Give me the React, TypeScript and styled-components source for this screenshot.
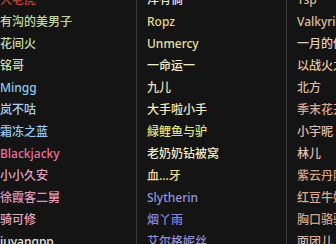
import React from "react";
import styled, { createGlobalStyle } from "styled-components";

const Global = createGlobalStyle`
  html, body {
    margin: 0;
    padding: 0;
    background: #141414;
    overflow: hidden;
  }
  body {
    font-family: "Noto Sans", "Noto Sans CJK SC", sans-serif;
  }
`;

const Board = styled.div`
  width: 336px;
  height: 244px;
  overflow: hidden;
  background: #141414;
`;

const Table = styled.div`
  display: grid;
  grid-template-columns: 147px 150px 150px;
  margin-left: -10px;
  margin-top: -11px;
`;

const Column = styled.div<{ $divider?: boolean }>`
  display: flex;
  flex-direction: column;
  padding-left: 10px;
  border-right: ${(p) => (p.$divider ? "1px solid #3a3a3a" : "none")};
  min-width: 0;
`;

const Name = styled.div<{ $color: string }>`
  height: 22px;
  line-height: 22px;
  font-size: 12px;
  font-weight: 500;
  color: ${(p) => p.$color};
  white-space: nowrap;
  overflow: visible;
`;

type Entry = [string, string];

const columns: Entry[][] = [
  [
    ["大老虎", "#d2412f"],
    ["有沟的美男子", "#bcd9a2"],
    ["花间火", "#c4dca8"],
    ["铭哥", "#cfdcaa"],
    ["Mingg", "#8fc9ee"],
    ["岚不咕", "#a3d2f0"],
    ["霜冻之蓝", "#95cbee"],
    ["Blackjacky", "#ea6f9b"],
    ["小小久安", "#e6a2c2"],
    ["徐霞客二舅", "#e495b6"],
    ["骑可修", "#e4a2c2"],
    ["juyangpp", "#e8e8e8"],
  ],
  [
    ["洋有倘", "#e6e6e6"],
    ["Ropz", "#e2d98f"],
    ["Unmercy", "#e8e0a2"],
    ["一命运一", "#f2f0d2"],
    ["九儿", "#ece4b4"],
    ["大手啦小手", "#f2eac4"],
    ["緑鲤鱼与驴", "#e2e272"],
    ["老奶奶钻被窝", "#f2eac4"],
    ["血...牙", "#f2da92"],
    ["Slytherin", "#9494d8"],
    ["烟丫雨", "#8484e2"],
    ["艾尔格妮丝", "#8e8ed8"],
  ],
  [
    ["Ysp", "#d8b898"],
    ["Valkyrie", "#dcbc9c"],
    ["一月的像", "#e2cab2"],
    ["以战火之", "#e2c2a2"],
    ["北方", "#dabaa2"],
    ["季末花开", "#daaa92"],
    ["小宇昵", "#e2baa2"],
    ["林儿", "#e2c2b2"],
    ["紫云丹阳", "#d2a282"],
    ["红豆牛奶", "#daaa8a"],
    ["胸口骆驼", "#d2a282"],
    ["面团儿", "#dab2a2"],
  ],
];

export default function App() {
  return (
    <Board>
      <Global />
      <Table>
        {columns.map((col, ci) => (
          <Column key={ci} $divider={ci < 2}>
            {col.map(([text, color], ri) => (
              <Name key={ri} $color={color}>
                {text}
              </Name>
            ))}
          </Column>
        ))}
      </Table>
    </Board>
  );
}
